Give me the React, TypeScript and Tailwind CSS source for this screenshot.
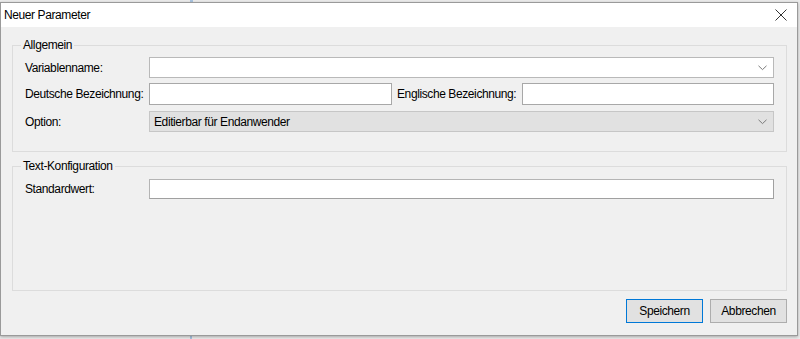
import React from 'react';

const font = { fontFamily: '"Liberation Sans", Arial, sans-serif' };

function Chevron() {
  return (
    <svg width="9" height="6" viewBox="0 0 9 6" className="shrink-0">
      <polyline points="0.5,0.8 4.5,4.6 8.5,0.8" fill="none" stroke="#7a7a7a" strokeWidth="1" />
    </svg>
  );
}

function GroupBox({ title, className, children }: { title: string; className: string; children: React.ReactNode }) {
  return (
    <div className={`relative w-[775px] border border-[#dcdcdc] ${className}`}>
      <span className="absolute left-[8px] top-[-9px] bg-[#f0f0f0] px-[2px] text-[12px] leading-[16px] text-black">
        {title}
      </span>
      {children}
    </div>
  );
}

export default function App() {
  return (
    <div className="relative h-[339px] w-[800px] overflow-hidden bg-[#ececec] text-[12px] tracking-[-0.4px] text-black" style={font}>
      <div className="absolute left-[190px] top-0 h-[2px] w-[3px] bg-[#a9c4e0]" />
      <div className="absolute bottom-0 left-[190px] h-[4px] w-[2px] bg-[#a9c4e0]" />

      <div className="relative mt-[2px] flex h-[334px] w-[798px] flex-col border border-[#9a9a9a] shadow-[0_1px_3px_rgba(0,0,0,0.3)]">
        {/* title bar */}
        <div className="flex h-[24px] items-center justify-between bg-white pl-[3px] pr-[10px]">
          <span className="text-[12px] leading-[16px]">Neuer Parameter</span>
          <svg width="12" height="12" viewBox="0 0 12 12">
            <line x1="0.5" y1="0.5" x2="11.5" y2="11.5" stroke="#333" strokeWidth="1" />
            <line x1="11.5" y1="0.5" x2="0.5" y2="11.5" stroke="#333" strokeWidth="1" />
          </svg>
        </div>

        {/* body */}
        <div className="flex flex-1 flex-col bg-[#f0f0f0] pl-[11px] pt-[18px]">
          <GroupBox title="Allgemein" className="h-[107px] px-[12px] pt-[11px]">
            <div className="flex h-[21px] items-center whitespace-nowrap">
              <span className="w-[124px] shrink-0">Variablenname:</span>
              <div className="flex h-[21px] w-[625px] shrink-0 items-center justify-end border border-[#b9b9b9] bg-white pr-[6px]">
                <Chevron />
              </div>
            </div>
            <div className="mt-[5px] flex h-[22px] items-center whitespace-nowrap">
              <span className="w-[124px] shrink-0">Deutsche Bezeichnung:</span>
              <div className="h-[22px] w-[243px] shrink-0 border border-[#a8a8a8] bg-white" />
              <span className="ml-[5px] w-[125px] shrink-0">Englische Bezeichnung:</span>
              <div className="h-[22px] w-[252px] shrink-0 border border-[#a8a8a8] bg-white" />
            </div>
            <div className="mt-[6px] flex h-[21px] items-center whitespace-nowrap">
              <span className="w-[124px] shrink-0">Option:</span>
              <div className="flex h-[21px] w-[625px] shrink-0 items-center justify-between border border-[#c6c6c6] bg-[#e1e1e1] pl-[4px] pr-[6px]">
                <span>Editierbar für Endanwender</span>
                <Chevron />
              </div>
            </div>
          </GroupBox>

          <GroupBox title="Text-Konfiguration" className="mt-[14px] h-[125px] px-[12px] pt-[12px]">
            <div className="flex h-[20px] items-center whitespace-nowrap">
              <span className="w-[124px] shrink-0">Standardwert:</span>
              <div className="h-[20px] w-[625px] shrink-0 border border-[#b4b4b4] border-b-[#a0a0a0] border-r-[#a0a0a0] bg-white" />
            </div>
          </GroupBox>

          <div className="mt-[8px] flex w-[775px] justify-end gap-[7px]">
            <button className="h-[24px] w-[77px] border border-[#0078d7] bg-[#e1e1e1] text-[12px]">Speichern</button>
            <button className="h-[24px] w-[77px] border border-[#adadad] bg-[#e1e1e1] text-[12px]">Abbrechen</button>
          </div>
        </div>
      </div>
    </div>
  );
}
